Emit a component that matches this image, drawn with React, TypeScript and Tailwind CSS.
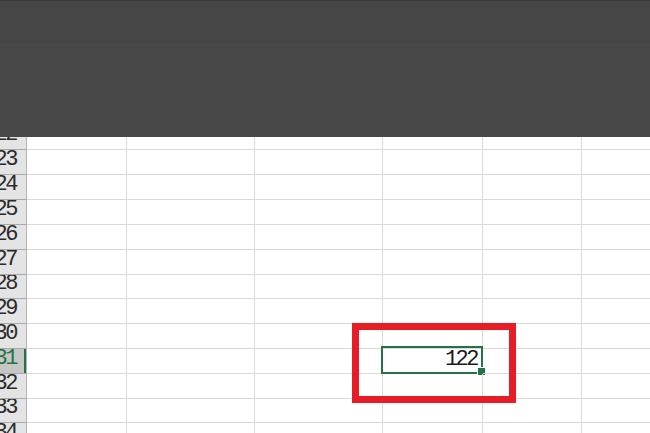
import type React from "react";

const rows: { n: number; h: string }[] = [
  { n: 22, h: "h-[13px]" },
  { n: 23, h: "h-[25px]" },
  { n: 24, h: "h-[25px]" },
  { n: 25, h: "h-[25px]" },
  { n: 26, h: "h-[25px]" },
  { n: 27, h: "h-[25px]" },
  { n: 28, h: "h-[24px]" },
  { n: 29, h: "h-[25px]" },
  { n: 30, h: "h-[25px]" },
  { n: 31, h: "h-[25px]" },
  { n: 32, h: "h-[25px]" },
  { n: 33, h: "h-[24px]" },
  { n: 34, h: "h-[25px]" },
];

const cols = ["w-[100px]", "w-[128px]", "w-[128px]", "w-[100px]", "w-[99px]", "flex-1"];

const ActiveCell: React.FC = () => (
  <div className="absolute -left-[2px] -top-[3px] w-[102px] h-[28px] border-2 border-[#217346] flex items-end justify-end pr-[4px] pb-[1px]">
    <span className="text-[22px] leading-none tracking-[-2.5px] text-[#1a1a1a]">122</span>
    <div className="absolute -right-[5px] -bottom-[4px] w-[9px] h-[9px] bg-[#217346] border border-white" />
  </div>
);

const App: React.FC = () => {
  return (
    <div className="relative w-[650px] h-[433px] overflow-hidden bg-white font-['Liberation_Mono',monospace]">
      <div className="h-[137px] flex flex-col bg-[#484848]">
        <div className="h-px bg-[#363636]" />
        <div className="h-[44px] bg-[#464646] border-b border-[#4b4b4b]" />
      </div>

      <div className="flex flex-col">
        {rows.map((r) => {
          const active = r.n === 31;
          return (
            <div key={r.n} className={`flex ${r.h}`}>
              <div
                className={`relative w-[27px] shrink-0 flex items-end justify-end overflow-hidden whitespace-nowrap pr-[10px] pb-[3px] border-b border-r border-b-[#a9a9a9] border-r-[#b4b4b4] ${
                  active ? "bg-[#c6c6c6] text-[#217346]" : "bg-[#e4e4e4] text-[#2a2a2a]"
                }`}
              >
                <span className="text-[22px] leading-none tracking-[-2.5px]">{r.n}</span>
                {active && <div className="absolute right-0 top-0 bottom-0 w-[2px] bg-[#217346]" />}
              </div>
              {cols.map((w, i) => (
                <div
                  key={i}
                  className={`relative ${w} ${i === 5 ? "" : "shrink-0 border-r"} border-b border-[#dadada]`}
                >
                  {active && i === 3 && <ActiveCell />}
                </div>
              ))}
            </div>
          );
        })}
      </div>

      <div className="absolute left-[352px] top-[323px] w-[164px] h-[80px] border-[7px] border-[#e81c24]" />
    </div>
  );
};

export default App;
